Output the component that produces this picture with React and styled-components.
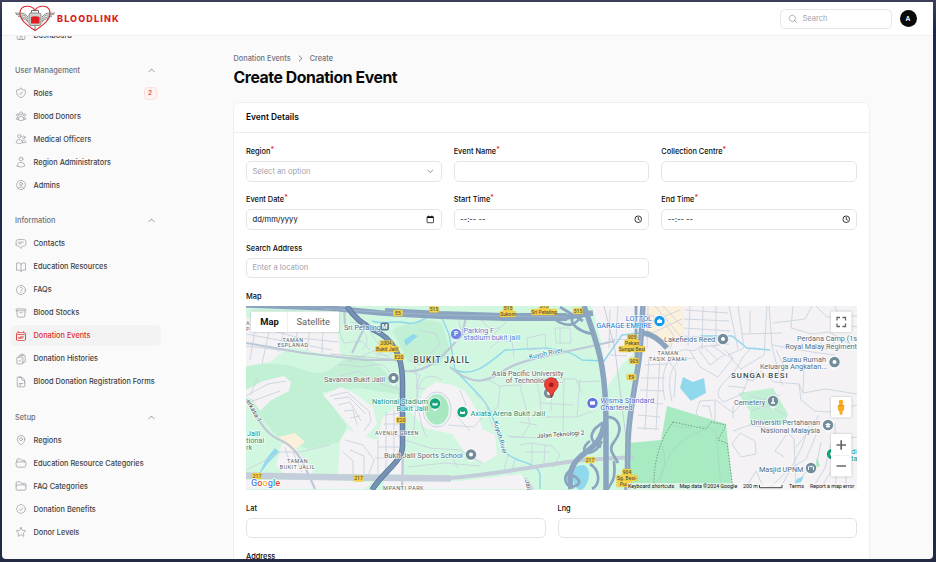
import React from "react";
import styled, { createGlobalStyle, css } from "styled-components";
import {
  HiOutlineHome, HiOutlineShieldCheck, HiOutlineUserGroup, HiOutlineUsers, HiOutlineUser,
  HiOutlineUserCircle, HiOutlineChatBubbleBottomCenterText, HiOutlineBookOpen,
  HiOutlineQuestionMarkCircle, HiOutlineArchiveBox, HiOutlineCalendarDays,
  HiOutlineClipboardDocumentCheck, HiOutlineDocumentText, HiOutlineMapPin,
  HiOutlineFolderOpen, HiOutlineFolder, HiOutlineCheckBadge, HiOutlineStar,
  HiOutlineMagnifyingGlass, HiChevronUp, HiChevronDown, HiChevronRight,
} from "react-icons/hi2";

const GlobalStyle = createGlobalStyle`
  * { box-sizing: border-box; }
  html, body, #root { height: 100%; margin: 0; }
  body { font-family: Inter, "Liberation Sans", sans-serif; overflow: hidden; background: #222c49; }
`;

const Desktop = styled.div`
  height: 562px;
  width: 936px;
  padding: 2px 3px 3px 2px;
  background: linear-gradient(180deg, #3b3f59 0, #3b3f59 3px, #1d2a4c 30px, #222a44 100%);
`;
const Window = styled.div`
  height: 557px;
  width: 931px;
  display: flex;
  flex-direction: column;
  overflow: hidden;
  background: #fafafa;
  border-radius: 0 0 4px 4px;
`;
const Topbar = styled.header`
  flex: none;
  height: 34px;
  padding: 0 16.500px 0 13px;
  display: flex;
  align-items: center;
  background: #fff;
  border-bottom: 1px solid #efeff0;
  z-index: 1;
`;
const Brand = styled.div`
  display: flex;
  align-items: center;
  flex: 1;
`;
const BrandName = styled.span`
  margin-left: 2px;
  font-size: 9px;
  font-weight: 800;
  letter-spacing: 1.15px;
  color: #dc1f26;
`;
const SearchBox = styled.div`
  width: 112px;
  height: 20px;
  padding: 0 7px;
  display: flex;
  align-items: center;
  gap: 4.5px;
  border: 1px solid #e6e6e8;
  border-radius: 5px;
  font-size: 7.5px;
  color: #a1a1aa;
  svg { width: 10px; height: 10px; color: #85858e; }
`;
const Avatar = styled.div`
  margin-left: 7.5px;
  width: 17px;
  height: 17px;
  border-radius: 50%;
  background: #09090b;
  color: #fff;
  font-size: 6.6px;
  font-weight: 600;
  display: flex;
  align-items: center;
  justify-content: center;
`;
const Body = styled.div`
  flex: 1;
  min-height: 0;
  display: flex;
`;
const Sidebar = styled.nav`
  width: 184px;
  flex: none;
  padding-left: 9px;
  overflow: hidden;
`;
const SidebarScroll = styled.div`
  margin-top: -12px;
  display: flex;
  flex-direction: column;
  gap: 14.4px;
`;
const Group = styled.section`
  width: 150px;
  display: flex;
  flex-direction: column;
  gap: 2px;
`;
const GroupHeader = styled.div`
  height: 21px;
  padding: 1px 5px 0 4px;
  display: flex;
  align-items: center;
  justify-content: space-between;
  font-size: 7.4px;
  font-weight: 500;
  color: #71717a;
  svg { width: 9px; height: 9px; }
`;
const NavItem = styled.a`
  height: 21px;
  padding: 1px 4.5px 0 4px;
  display: flex;
  align-items: center;
  gap: 6.5px;
  border-radius: 5px;
  white-space: nowrap;
  font-size: 7.34px;
  font-weight: 500;
  color: #3f3f46;
  > svg { flex: none; width: 12px; height: 12px; color: #9c9ca5; }
  ${(p) => p.$active && css`
    background: #f3f3f4;
    color: #dc2f30;
    > svg { color: #dc3b3c; }
  `}
`;
const Badge = styled.span`
  margin-left: auto;
  width: 13px;
  height: 13px;
  display: grid;
  place-items: center;
  font-size: 6.5px;
  color: #dc2626;
  background: #fef2f2;
  border: 1px solid #fbdfdf;
  border-radius: 3.5px;
`;
const Main = styled.main`
  width: 637px;
  margin-left: 47px;
  padding-top: 16px;
`;
const Crumbs = styled.div`
  height: 12px;
  padding-left: 0.5px;
  display: flex;
  align-items: center;
  gap: 5px;
  font-size: 7.35px;
  font-weight: 500;
  color: #71717a;
  svg { width: 9px; height: 9px; }
`;
const Title = styled.h1`
  margin: 3px 0 0;
  padding-left: 0.5px;
  height: 20px;
  line-height: 21px;
  font-size: 15.8px;
  font-weight: 700;
  letter-spacing: -0.42px;
  color: #09090b;
  white-space: nowrap;
`;
const Card = styled.section`
  margin-top: 15px;
  height: 520px;
  background: #fff;
  border: 1px solid #f0f0f1;
  border-radius: 7px;
`;
const CardHeader = styled.div`
  height: 30px;
  padding: 0 12px 1px;
  display: flex;
  align-items: center;
  border-bottom: 1px solid #ededee;
  font-size: 8.4px;
  font-weight: 600;
  color: #09090b;
`;
const Form = styled.div`
  padding: 12.4px 12px 0 12px;
  display: flex;
  flex-direction: column;
  gap: 11.8px;
`;
const FormRow = styled.div`
  display: grid;
  grid-template-columns: repeat(${(p) => p.$cols}, 1fr);
  column-gap: 12px;
`;
const FieldBox = styled.div`
  grid-column: span ${(p) => p.$span || 1};
  display: flex;
  flex-direction: column;
  gap: 4px;
`;
const Label = styled.label`
  height: 12px;
  line-height: 14px;
  font-size: 7.4px;
  font-weight: 500;
  color: #09090b;
  sup { color: #dc2626; font-size: 7px; line-height: 0; vertical-align: 2px; }
`;
const Control = styled.div`
  height: 20.3px;
  padding: 0 6px 0 5.5px;
  display: flex;
  align-items: center;
  justify-content: space-between;
  border: 1px solid #e4e4e7;
  border-radius: 5px;
  font-size: 7.6px;
  color: ${(p) => (p.$muted ? "#a1a1aa" : "#09090b")};
  svg { width: 8.5px; height: 8.5px; color: ${(p) => (p.$muted ? "#60606a" : "#09090b")}; }
`;
const MapFrame = styled.div`
  height: 184.5px;
  overflow: hidden;
  svg { display: block; }
`;

const wing = "M0 0 C5 1 8 -2 13 4 M1 1.2 C6 3 9 0 13 6 M3 3.2 C7 4.5 10 3 13 8 M6 5.3 C9 6 11 6 13 9.5";
const Logo = () => (
  <svg width="40" height="27" viewBox="0 0 40 27" fill="none">
    <path d="M20 5.5C17-.5 5.500-.5 5 7.500 4.500 15 12 20 20 25.500 28 20 35.500 15 35 7.500 34.500-.5 23-.5 20 5.500Z" stroke="#e3262b" strokeWidth="1.100" />
    <g stroke="#666" strokeWidth=".8"><path d={wing} transform="translate(0 8)" /><path d={wing} transform="translate(40 8) scale(-1 1)" /></g>
    <path d="M16.500 8.500V5.500h7v3M20 20v6" stroke="#666" strokeWidth=".9" />
    <rect x="14" y="8" width="12" height="12.500" rx="2" fill="#cfcfd1" stroke="#777" strokeWidth=".8" />
    <path d="M16 12q4-1.500 8.500 0v6.500H16Z" fill="#e01d20" />
  </svg>
);
const CalendarGlyph = () => (
  <svg viewBox="0 0 16 16" fill="none" stroke="currentColor" strokeWidth="1.400"><rect x="2" y="3" width="12" height="11.500" rx="1" /><path d="M2 4.300h12" strokeWidth="2.400" /><path d="M5 1v3M11 1v3" /></svg>
);
const ClockGlyph = () => (
  <svg viewBox="0 0 16 16" fill="none" stroke="currentColor" strokeWidth="1.500"><circle cx="8" cy="8" r="6.200" /><path d="M8 4v4.300l3 1.700" /></svg>
);

const navGroups = [
  { items: [[HiOutlineHome, "Dashboard"]] },
  { title: "User Management", items: [
    [HiOutlineShieldCheck, "Roles", 2], [HiOutlineUserGroup, "Blood Donors"], [HiOutlineUsers, "Medical Officers"],
    [HiOutlineUser, "Region Administrators"], [HiOutlineUserCircle, "Admins"]] },
  { title: "Information", items: [
    [HiOutlineChatBubbleBottomCenterText, "Contacts"], [HiOutlineBookOpen, "Education Resources"],
    [HiOutlineQuestionMarkCircle, "FAQs"], [HiOutlineArchiveBox, "Blood Stocks"],
    [HiOutlineCalendarDays, "Donation Events"], [HiOutlineClipboardDocumentCheck, "Donation Histories"],
    [HiOutlineDocumentText, "Blood Donation Registration Forms"]] },
  { title: "Setup", items: [
    [HiOutlineMapPin, "Regions"], [HiOutlineFolderOpen, "Education Resource Categories"],
    [HiOutlineFolder, "FAQ Categories"], [HiOutlineCheckBadge, "Donation Benefits"], [HiOutlineStar, "Donor Levels"]] },
];

const MapText = styled.text`
  font-family: Roboto, sans-serif;
  font-size: ${(p) => p.$size || 7.3}px;
  font-weight: ${(p) => p.$weight || 400};
  letter-spacing: ${(p) => p.$track || 0}px;
  fill: ${(p) => p.$color || "#566c7c"};
  text-anchor: ${(p) => p.$anchor || "start"};
  paint-order: stroke;
  stroke: ${(p) => p.$halo || "rgba(255,255,255,.8)"};
  stroke-width: ${(p) => (p.$plain ? 0 : 1.6)}px;
  stroke-linejoin: round;
`;

const urban = [
  "246,317 280,331 323,328 338,334 341,358 310,351 290,346 270,362 246,366",
  "246,390 263,381 284,376 291,382 289,391 270,401 260,411 252,399 246,398",
  "323,395 341,387 352,392 373,407 377,424 366,437 356,434 337,411",
  "340,440 348,429 362,436 378,440 382,418 396,407 403,412 403,474 338,474",
  "282,443 297,450 312,470 314,474 285,474 276,466",
  "411,412 420,400 424,390 436,382 452,385 465,391 478,412 482,429 495,435 497,455 484,463 466,454 452,434 425,428",
  "246,480 330,480 372,482 365,489 246,489",
  "384,481 460,481 520,474 534,489 384,489",
  "592,306 857,306 857,490 629,490 634,400 637,350 622,364 607,388 602,345",
];
const streets = [
  "M246 334 332 350M246 346 322 355M257 319 250 360M270 327 262 364M284 331 278 352M298 329 294 347M310 328 307 351M323 328 322 353M246 324 300 338 338 342",
  "M330 396 347 392 369 411 371 421 364 431M334 399 349 397 366 414M338 405 350 402 361 421M344 411 353 410 357 425M350 418 360 416",
  "M246 396 268 384 286 381M250 402 280 391M258 378 250 395",
  "M386 415 400 413M384 424 402 424M384 435 402 436M378 447 403 447M375 458 403 458M386 412V470M394 410V470M378 440V474M345 440 363 445 374 460 369 474M350 450 364 456 364 474M343 452 353 461 353 474",
  "M285 447 292 470M293 452 302 472M246 470 262 462 280 452 300 452 330 445",
  "M350 322 367 325 374 338 382 348 377 357M338 328 344 343 362 341 370 350M352 330C366 327 372 340 362 350M375 354 388 356 395 350M348 362 376 350 397 362",
  "M338 365C350 363 356 370 372 365S390 376 399 390M340 376 358 371 384 385 399 389",
  "M420 330 436 334 440 345 430 353M410 361 420 365 430 356 444 355 452 365M411 372 420 375 416 388 425 389M442 380C430 372 420 378 418 389S420 425 427 438",
  "M415 366C421 395 412 420 414 438M405 405 418 407M405 440 430 448 460 450 482 463M408 467 445 463 480 466",
  "M460 390 466 405 457 416 470 431M448 425 474 427 482 418M475 393 486 403 490 420 500 437M449 453 458 468",
  "M487 379 500 386 519 385 536 378 576 379 582 393M500 386 498 407 490 413M520 386 530 424 522 437 508 436M536 378 540 397 541 417 577 417 580 379M541 403 573 405M551 379V411M564 379 563 432M577 417 595 410M510 437 545 438M520 422 537 425M577 382 600 381",
  "M520 445 530 443 552 446 560 455 552 468M525 452 550 452M532 443V465M545 445 544 464M516 457 510 475M500 437 508 455 504 470",
  "M458 316 462 335 478 332 491 337 500 328M480 315C485 333 503 332 508 318M490 348 500 340 512 342 514 357M555 328 570 328 571 343 556 343ZM560 328V343M527 338 545 334 546 348 528 350Z",
  "M610 310 609 348M618 306 616 338M606 327 637 325M608 339 635 340M610 355 627 356",
  "M645 365 668 364M641 378 665 378M640 390 664 391M639 402 663 404M638 415 660 417M637 428 659 429M649 357 645 430M660 356 656 430",
  "M665 400C661 383 662 364 675 354S690 356 700 347L729 344M672 401C668 384 668 370 680 360L694 358M668 360 676 371 674 398",
  "M685 310 728 313M684 319 729 321M684 328 730 331M684 336 729 339M690 306 688 346M703 306 702 350M716 306 716 347M729 306 738 349",
  "M690 351 700 367 718 377 733 358 724 349M699 350 710 365 725 354M705 348 718 360M711 345 727 356",
  "M738 306 744 348 728 355 741 369 764 355 767 306M742 334 782 333M750 311V333M769 306 772 347 782 385M773 323 805 319 812 306M772 345 812 352 835 355M793 306 791 328 812 334 829 332 857 348",
  "M755 347C742 352 740 366 732 374S710 394 724 402L742 394 752 370M735 376 753 381 757 371M728 386 746 388",
  "M700 401 716 400 733 413 744 401M700 401 696 413 703 423M702 406 709 406 712 418M715 401V423M733 406 733 418",
  "M760 371 774 382 799 384 803 393 826 389 857 394M785 368 776 350M799 384 801 400 815 411 829 412 857 405M804 365 803 392M750 395 763 400 780 395M752 410 770 406 786 415",
  "M733 431 750 425 786 431 794 439 796 489M740 433 732 444 741 457 756 454 755 441ZM745 489 756 471 763 486M796 447 813 426 819 415M793 467 806 459 816 435M802 476 817 463 821 442M786 435 775 451 784 457M780 489 801 449 811 421M770 488 785 473",
  "M812 489 825 468 832 440 857 437M820 489 836 464 857 458M835 423 836 489M846 435V489M820 343 826 350 835 342M816 306 827 317 857 316M835 306 842 324 857 327",
  "M648 306 647 348M655 306 681 337M663 306 682 326M646 314 661 318 674 336 670 349M648 323 680 310M648 335 682 319",
];
const arterials = [
  "M246 399C259 418 263 433 280 440S303 462 315 489",
  "M367 322 352 353M246 343 304 353 365 360 400 360",
  "M405 371C432 374 450 347 462 335L466 317",
  "M450 367C475 389 490 380 505 370S548 356 615 341",
  "M344 306 345 325M403 450 402 489M525 478 533 489",
];
const highways = [
  "M246 305 330 308 381 313 440 315 505 317 567 317 593 313",
  "M584 306C588 318 598 343 602 367S606 410 606 425V490",
  "M571 489C568 474 572 464 580 457 594 446 602 441 604 423",
  "M643 306C642 320 641 345 639 360S629 415 628 440L627 490",
  "M643 333C652 334 660 340 667 348",
];
const ramps = [
  "M553 318C567 329 577 327 586 309M575 315C566 322 578 331 592 334M605 417C618 416 625 428 614 442 607 450 615 456 618 463",
  "M606 421C590 429 586 440 601 447M590 441C575 452 593 461 602 441M572 469C561 476 565 489 575 486S575 474 567 475M590 464C600 470 601 484 592 489",
  "M614 461C616 483 611 481 608 489M636 306V360M560 307 583 321",
];
const shields = [
  ["E5", 398, 313], ["515", 434, 309.5], ["2004", 386, 343.5, 13], ["Bukit Jalil", 387, 349, 23], ["E20", 399, 357],
  ["E20", 401, 420], ["217", 257, 476], ["217", 358.5, 478.5], ["515", 508, 308], ["Sukom", 508, 314, 16],
  ["515", 544, 306], ["Sri Petaling", 544, 312, 26], ["515", 578, 311], ["905", 632, 337.5], ["Pekan", 632, 343, 15],
  ["Sungai Besi", 632, 349, 26], ["905", 634, 361], ["E9", 631.5, 377], ["217", 590, 460], ["904", 627, 472],
  ["Sg. Besi-", 627, 478, 21], ["Puc", 624, 484, 15],
];
const Pin = ({ x, y, color = "#738c9c", children }) => (
  <g transform={`translate(${x} ${y})`}>
    <path d="M0-6C8-6 7 3 0 8-7 3-8-6 0-6Z" fill="#fff" opacity=".8" />
    <circle r="5.200" fill={color} />
    {children || <circle r="2" fill="#fff" />}
  </g>
);
const Pegman = () => (
  <g fill="#f9ab21"><circle cx="841" cy="402" r="2.300" /><path d="M837.500 405.500q3.500-2 7 0l-.7 5-1 .3-.6 4h-2.400l-.6-4-1-.3Z" /><path d="M839 404.500h4v1.200h-4Z" fill="#dd7f12" /></g>
);

const StreetMap = () => (
  <svg width="611" height="184" viewBox="246 306 611 184" fill="none">
    <rect x="246" y="306" width="611" height="184" fill="#d2f7e1" />
    <path d="M246 367C265 362 285 362 307 371S338 358 353 356 390 370 401 395L360 388 322 392 347 426 340 442 308 449 282 441 260 417 246 402ZM392 330C410 322 430 316 442 324L450 350 438 366 408 362Z" fill="#c1f0d4" />
    {urban.map((p) => <polygon key={p} points={p} fill="#f4f2f4" />)}
    <path d="M647 306H684V333L667 349 647 336Z" fill="#fbf0dc" />
    <path d="M278 437 295 433 305 442 292 452Z" fill="#fbf0dc" />
    <path d="M667 406 726 424 733 490H628L629 443 661 440Z" fill="#a8ebc3" />
    <path d="M738 393 773 388 788 414 784 424 750 425 750 411Z" fill="#c1f0d4" />
    <path d="M817 457 820 466 815 468Z" fill="#a8ebc3" />
    <g fill="#90d9ed"><path d="M680 388 683 377 693 382 704 378 706 393 691 401ZM404 340 413 334 418 336 412 341 406 346ZM575 467Q585 462 588 469T586 485 576 487 573 475ZM257 478 266 459 275 448 279 452 268 463ZM797 479 804 476 801 482 794 484Z" /></g>
    <path d="M372 321C384 325 395 320 407 323S430 312 440 314L449 334 455 370 477 393C495 410 495 430 504 451 515 464 535 460 540 474V489M455 370C475 378 490 362 505 350 530 350 560 342 582 360L604 361 622 335 650 332M700 336 732 336 747 348 770 350" stroke="#8bd8ec" strokeWidth="1.400" />
    <ellipse cx="437" cy="409.500" rx="12.500" ry="16" fill="#a8e8c0" stroke="#f0f5f6" strokeWidth="1.500" />
    <ellipse cx="437" cy="409.500" rx="14" ry="17.500" stroke="#c9d4df" strokeWidth="1" />
    <g stroke="#c9d4df" strokeWidth=".9">{streets.map((d) => <path key={d} d={d} />)}</g>
    <path d="M330 354 400 360M604 306 615 350 630 470" stroke="#bcc6cd" strokeWidth=".8" />
    <g stroke="#bec9d7" strokeWidth="2.200">{arterials.map((d) => <path key={d} d={d} />)}</g>
    <path d="M246 475 351 477 451 478C505 473 540 465 584 460L634 457" stroke="#c4ceda" strokeWidth="4" />
    <path d="M246 475.500 351 477.500 451 478.500" stroke="#c4ceda" strokeWidth="6.500" />
    <g stroke="#8ba4c0" strokeWidth="2.700">{ramps.map((d) => <path key={d} d={d} />)}</g>
    <g stroke="#8ba4c0" strokeWidth="5.500">{highways.map((d) => <path key={d} d={d} />)}</g>
    <path d="M385 312 440 315 505 317 567 317" stroke="#8ba4c0" strokeWidth="8" />
    <path d="M323 309 440 315 567 317M643 306C642 320 641 345 639 360S629 415 628 440L627 490" stroke="#a8bbcf" strokeWidth=".7" />
    <path d="M347 306C353 316 362 324 374 330 391 338 402 352 402.500 380V446C402 463 384 470 372 490" stroke="#54749d" strokeWidth="5.500" />
    <path d="M347 306C353 316 362 324 374 330 391 338 402 352 402.500 380V446C402 463 384 470 372 490" stroke="#7791b4" strokeWidth="4" />
    <path d="M673 422 706 429 711 422 726 425 718 440 727 443 733 489M673 422C660 440 653 462 654 489" stroke="#688675" strokeWidth=".8" strokeDasharray="1.500 1.500" />
    <path d="M659 489C662 457 680 436 705 430M672 425C690 432 704 420 716 432L721 489M662 445Q670 465 655 484" stroke="#a5d9be" strokeWidth=".9" />

    {shields.map(([t, x, y, w = 9.500]) => (
      <g key={`${t}${x}${y}`}><rect x={x - w / 2} y={y - 3} width={w} height="6" rx="1" fill="#f8d54f" stroke="#dfb927" strokeWidth=".3" />
        <MapText x={x} y={y + 1.900} $size={5} $weight={500} $color="#5a5138" $anchor="middle" $plain>{t}</MapText></g>
    ))}

    <MapText x="293" y="341.500" $size={5.400} $track={0.5} $color="#4f6068" $anchor="middle">TAMAN</MapText>
    <MapText x="293" y="347" $size={5.400} $track={0.5} $color="#4f6068" $anchor="middle">ESPLANAD</MapText>
    <MapText x="246" y="325" $size={5.500}>A</MapText><MapText x="246" y="331" $size={5.500}>P</MapText>
    <MapText x="344" y="329.500">Sri Petaling</MapText>
    <rect x="380.500" y="322.500" width="8.500" height="8" rx="2" fill="#60788b" /><MapText x="384.700" y="329" $size={6.500} $weight={700} $color="#fff" $anchor="middle" $plain>M</MapText>
    <MapText x="413.500" y="363" $size={8.200} $track={1} $weight={500} $color="#38474e">BUKIT JALIL</MapText>
    <MapText x="324" y="381.500">Savanna Bukit Jalil</MapText><Pin x={393.500} y={378} />
    <MapText x="428" y="403.500" $color="#159479" $anchor="end">National Stadium</MapText>
    <MapText x="428" y="411" $color="#159479" $anchor="end">Bukit Jalil</MapText>
    <Pin x={435} y={403.500} color="#15a37c"><path d="M-2.500-1q2.500 2 5 0v3h-5Z" fill="#fff" /></Pin>
    <MapText x="470.500" y="415.500" $color="#159479">Axiata Arena Bukit Jalil</MapText>
    <Pin x={462.500} y={412} color="#15a37c"><path d="M-2.500-1q2.500 2 5 0v3h-5Z" fill="#fff" /></Pin>
    <MapText x="397" y="434.500" $size={5.300} $track={0.5} $color="#4f6068" $anchor="middle">AVENUE GREEN</MapText>
    <MapText x="384" y="458">Bukit Jalil Sports School</MapText><Pin x={471} y={454.500} />
    <MapText x="297.500" y="463" $size={5.400} $track={0.5} $color="#4f6068" $anchor="middle">TAMAN</MapText>
    <MapText x="297.500" y="468.500" $size={5.400} $track={0.5} $color="#4f6068" $anchor="middle">BUKIT JALIL</MapText>
    <MapText x="383" y="490" $size={5.600} $track={0.5} $color="#4f6068">MPANTI PARK</MapText>
    <MapText x="247" y="436" $color="#159479">Jalil</MapText><MapText x="246" y="443" $color="#159479">tional</MapText><MapText x="246" y="450" $color="#159479">rk</MapText>
    <MapText transform="translate(246 401) rotate(61)" $size={6.600} $color="#40515d">erkasa 1</MapText>
    <Pin x={456} y={334} color="#7584e4"><MapText y="2.300" $size={6.300} $weight={700} $color="#fff" $anchor="middle" $plain>P</MapText></Pin>
    <MapText x="463.500" y="333" $color="#557ed2">Parking F</MapText><MapText x="463.500" y="340" $color="#557ed2">stadium bukit jalil</MapText>
    <MapText transform="translate(529.500 359) rotate(-12)" $size={6.600} $color="#237f9a">Kuyoh River</MapText>
    <MapText transform="translate(493.500 421.500) rotate(74)" $size={6.600} $color="#237f9a">Kuyoh River</MapText>
    <MapText x="563.500" y="376" $anchor="end">Asia Pacific University</MapText><MapText x="563.500" y="383" $anchor="end">of Technology &amp;...</MapText>
    <Pin x={549} y={393} color="#77909b" />
    <path d="M551.500 398C550.500 391 544.500 390 544.500 384.500A6.800 6.800 0 0 1 558.100 384.500C558.100 390 552.500 391 551.500 398Z" fill="#e94335" stroke="#b61d18" strokeWidth=".7" /><circle cx="551.300" cy="384.800" r="2.400" fill="#aa1719" />
    <MapText transform="translate(537 438) rotate(-4)" $size={6.100} $color="#34484e">Jalan Teknologi 2</MapText>
    <MapText transform="translate(525 480) rotate(78)" $size={6.500} $color="#34484e">Jala</MapText>
    <Pin x={592.500} y={403} color="#6373df"><path d="M-2.500-1.700h5v3.500h-5Z" fill="#fff" /></Pin>
    <MapText x="600.500" y="402.500" $color="#5869c4">Wisma Standard</MapText><MapText x="600.500" y="410" $color="#5869c4">Chartered</MapText>
    <MapText x="652" y="320.500" $color="#1b78d4" $anchor="end">LOTTOL</MapText><MapText x="652" y="328" $color="#1b78d4" $anchor="end">GARAGE EMPIRE</MapText>
    <Pin x={659.500} y={321} color="#1596f0"><path d="M-2.500-1h5v3h-5ZM-1.200-1q1.200-3 2.400 0" fill="#fff" /></Pin>
    <MapText x="664" y="342">Lakefields Reed</MapText><Pin x={723} y={339} />
    <MapText x="668" y="355" $size={5.400} $track={0.5} $color="#4f6068" $anchor="middle">TAMAN</MapText><MapText x="668" y="360.500" $size={5.400} $track={0.5} $color="#4f6068" $anchor="middle">TASIK DAMAI</MapText>
    <MapText x="731" y="378" $size={7.800} $track={1.050} $weight={500} $color="#38474e">SUNGAI BESI</MapText>
    <MapText x="797" y="341">Perdana Camp (1s</MapText><MapText x="857" y="348.500" $anchor="end">Royal Malay Regiment</MapText>
    <MapText x="826" y="361.500" $anchor="end">Surau Rumah</MapText><MapText x="827" y="369" $anchor="end">Keluarga Angkatan...</MapText><Pin x={834.500} y={362} />
    <MapText x="734" y="404.500">Cemetery</MapText><Pin x={773} y={401}><path d="M-2 2h4M0-3v5" stroke="#fff" strokeWidth="1.500" /></Pin>
    <MapText x="820" y="425" $anchor="end">Universiti Pertahanan</MapText><MapText x="820" y="432.500" $anchor="end">Nasional Malaysia</MapText>
    <Pin x={828} y={425}><path d="M-3-.5 0-2 3-.5 0 1ZM-2 .8v1.200q2 1 4 0V.8" fill="#fff" /></Pin>
    <MapText x="759" y="472">Masjid UPNM</MapText><Pin x={811} y={468}><path d="M-2.500 2v-3l1-1 1.500 1 1.500-1 1 1v3" stroke="#fff" /></Pin>
    <Pin x={832} y={454} color="#15a37c" /><MapText x="851" y="454" $color="#159479">di</MapText><MapText x="851" y="461" $color="#159479">ta</MapText>

    <g filter="drop-shadow(0 .5px 1px rgba(0,0,0,.25))" fill="#fff">
      <rect x="251" y="311.500" width="88" height="20.500" rx=".8" /><rect x="831" y="311.500" width="20.500" height="20.500" rx="1" />
      <rect x="831" y="397" width="20.500" height="20.500" rx="1" /><rect x="831" y="434" width="20.500" height="42.500" rx="1" />
    </g>
    <path d="M287.500 311.500V332M833.500 455.500H849" stroke="#e9e9e9" strokeWidth=".7" />
    <MapText x="269.500" y="325.300" $size={9.400} $weight={700} $color="#111" $anchor="middle" $plain>Map</MapText>
    <MapText x="313.300" y="325.300" $size={9.400} $color="#606060" $anchor="middle" $plain>Satellite</MapText>
    <path d="M837 320.500V317.500H840M842.500 317.500H845.500V320.500M845.500 323.500V326.500H842.500M840 326.500H837V323.500" stroke="#666" strokeWidth="1.300" />
    <Pegman />
    <path d="M836.500 445H846M841.200 440.200V449.800M836.500 466H846" stroke="#666" strokeWidth="1.700" />
    <rect x="627" y="483" width="230" height="7" fill="#f7f7f7" opacity=".65" />
    <MapText x="628" y="488" $size={5.350} $color="#111" $plain>Keyboard shortcuts</MapText>
    <MapText x="679.500" y="488" $size={5.300} $color="#111" $plain>Map data ©2024 Google</MapText>
    <MapText x="743" y="488" $size={5.300} $color="#111" $plain>200 m</MapText><path d="M759.500 485V487.700H782V485" stroke="#444" strokeWidth="1" />
    <MapText x="789" y="488" $size={5.300} $color="#111" $plain>Terms</MapText><MapText x="810" y="488" $size={5.300} $color="#111" $plain>Report a map error</MapText>
    <MapText x="251" y="485.500" $size={9.200} $weight={500} $halo="#fff">
      <tspan fill="#4285f4">G</tspan><tspan fill="#ea4335">o</tspan><tspan fill="#fbbc05">o</tspan><tspan fill="#4285f4">g</tspan><tspan fill="#34a853">l</tspan><tspan fill="#ea4335">e</tspan>
    </MapText>
  </svg>
);

const Field = ({ label, required, span, muted, value, icon }) => (
  <FieldBox $span={span}>
    <Label>{label}{required && <sup>*</sup>}</Label>
    <Control $muted={muted}><span>{value}</span>{icon}</Control>
  </FieldBox>
);

export default function App() {
  return (
    <Desktop>
      <GlobalStyle />
      <Window>
        <Topbar>
          <Brand><Logo /><BrandName>BLOODLINK</BrandName></Brand>
          <SearchBox><HiOutlineMagnifyingGlass />Search</SearchBox>
          <Avatar>A</Avatar>
        </Topbar>
        <Body>
          <Sidebar>
            <SidebarScroll>
              {navGroups.map((g, i) => (
                <Group key={i}>
                  {g.title && <GroupHeader>{g.title}<HiChevronUp /></GroupHeader>}
                  {g.items.map(([Icon, text, badge]) => (
                    <NavItem key={text} $active={text === "Donation Events"}>
                      <Icon />{text}{badge && <Badge>{badge}</Badge>}
                    </NavItem>
                  ))}
                </Group>
              ))}
            </SidebarScroll>
          </Sidebar>
          <Main>
            <Crumbs>Donation Events<HiChevronRight />Create</Crumbs>
            <Title>Create Donation Event</Title>
            <Card>
              <CardHeader>Event Details</CardHeader>
              <Form>
                <FormRow $cols={3}>
                  <Field label="Region" required muted value="Select an option" icon={<HiChevronDown />} />
                  <Field label="Event Name" required />
                  <Field label="Collection Centre" required />
                </FormRow>
                <FormRow $cols={3}>
                  <Field label="Event Date" required value="dd/mm/yyyy" icon={<CalendarGlyph />} />
                  <Field label="Start Time" required value="--:-- --" icon={<ClockGlyph />} />
                  <Field label="End Time" required value="--:-- --" icon={<ClockGlyph />} />
                </FormRow>
                <FormRow $cols={3}>
                  <Field label="Search Address" span={2} muted value="Enter a location" />
                </FormRow>
                <FieldBox><Label>Map</Label><MapFrame><StreetMap /></MapFrame></FieldBox>
                <FormRow $cols={2}><Field label="Lat" /><Field label="Lng" /></FormRow>
                <Field label="Address" />
              </Form>
            </Card>
          </Main>
        </Body>
      </Window>
    </Desktop>
  );
}
